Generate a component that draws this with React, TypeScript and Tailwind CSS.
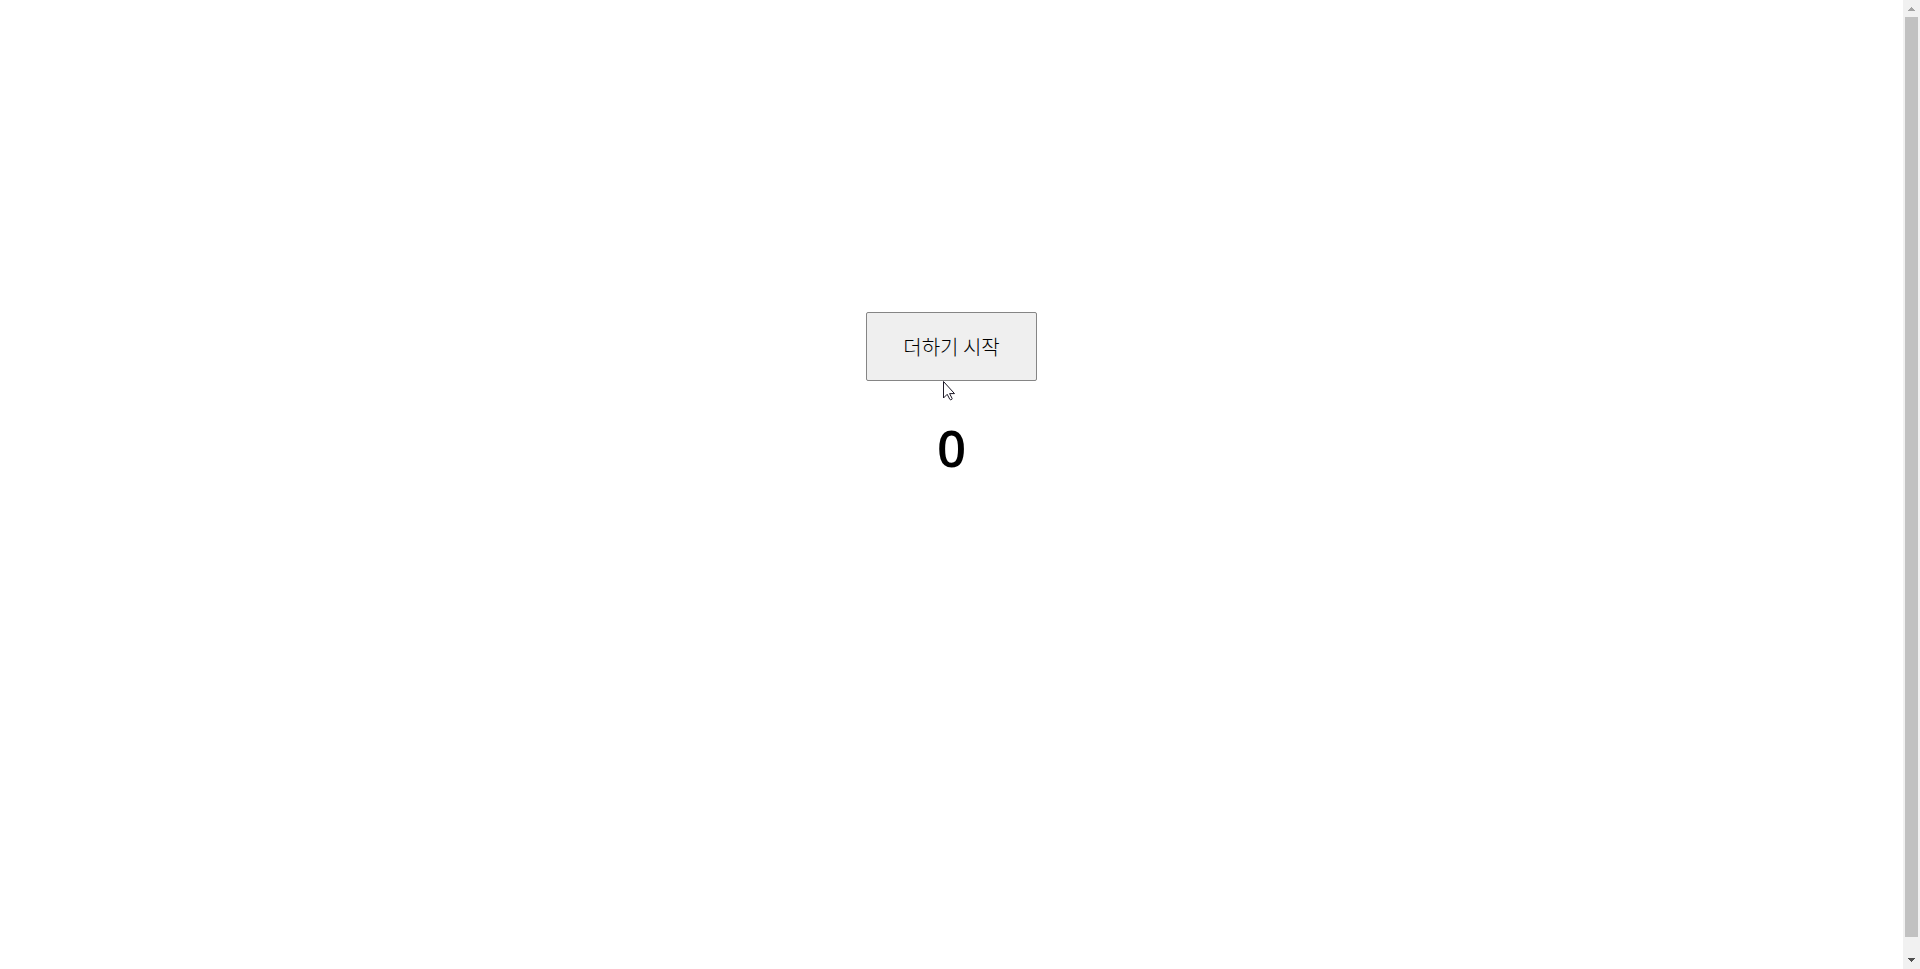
import { useState } from "react";

function Scrollbar() {
  return (
    <div className="flex w-[17px] shrink-0 flex-col items-center bg-[#f1f1f1]" aria-hidden="true">
      <svg className="h-[17px] w-[17px] shrink-0" viewBox="0 0 17 17" shapeRendering="crispEdges">
        <path d="M8 7h1v1h1v1h1v1h1v1H5v-1h1V9h1V8h1z" fill="#a3a3a3" />
      </svg>
      <div className="w-[13px] grow bg-[#c1c1c1]" />
      <svg className="mt-[15px] h-[17px] w-[17px] shrink-0" viewBox="0 0 17 17" shapeRendering="crispEdges">
        <path d="M5 6h7v1h-1v1h-1v1H9v1H8V9H7V8H6V7H5z" fill="#505050" />
      </svg>
    </div>
  );
}

function Pointer() {
  return (
    <svg
      className="pointer-events-none absolute top-full left-[77px] h-5 w-3"
      viewBox="0 0 12 20"
      aria-hidden="true"
    >
      <path
        d="M.5 .5v16.5l3.7-3.7 2.6 5q.8 1 2 .1.6-.4.2-1.2l-2.4-4.6h4.9z"
        fill="#fff"
        stroke="#1c1826"
        strokeWidth="1"
      />
    </svg>
  );
}

export default function App() {
  const [count, setCount] = useState(0);

  return (
    <div className="flex h-screen bg-white font-['Noto_Sans_CJK_KR',sans-serif] text-black">
      <main className="flex grow flex-col items-center pt-[312px]">
        <div className="relative">
          <button
            type="button"
            onClick={() => setCount(count + 1)}
            className="block rounded-[2px] border border-[#858585] bg-[#efefef] px-9 py-5 text-[20px] leading-[27px] font-light"
          >
            더하기 시작
          </button>
          <Pointer />
        </div>
        <h1 className="mt-8 font-['Open_Sans','Noto_Sans_CJK_KR',sans-serif] text-[51px] leading-[68px] font-semibold">
          {count}
        </h1>
      </main>
      <Scrollbar />
    </div>
  );
}
